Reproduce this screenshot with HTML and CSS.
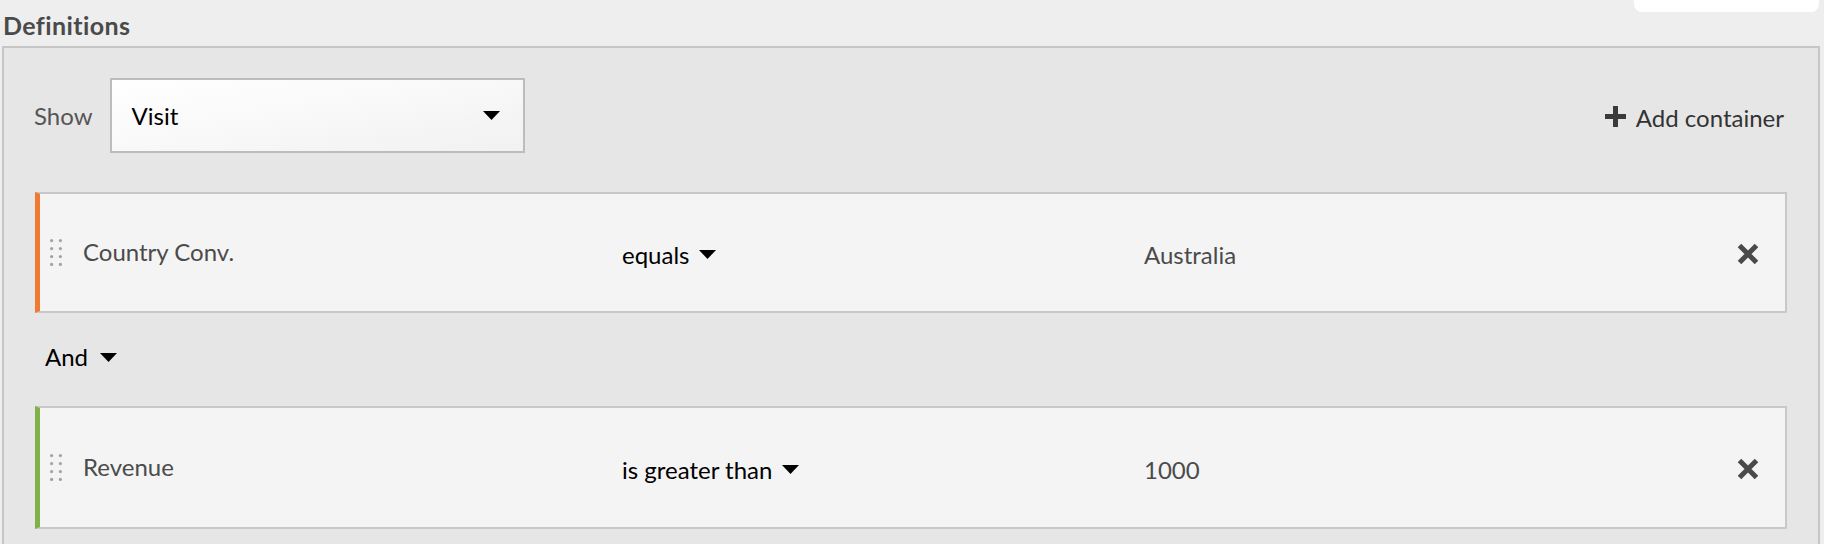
FILE: index.html
```html
<!DOCTYPE html>
<html lang="en">
<head>
<meta charset="utf-8">
<title>Definitions</title>
<link rel="stylesheet" href="styles.css">
</head>
<body>
<div class="redact"></div>
<h2 class="heading">Definitions</h2>
<section class="panel">
  <div class="toolbar">
    <label class="show-label">Show</label>
    <div class="select">
      <span class="select-value">Visit</span>
      <svg class="caret" width="17" height="9" viewBox="0 0 17 9"><polygon points="0,0 17,0 8.5,9" fill="#000"/></svg>
    </div>
    <div class="spacer"></div>
    <button class="add-btn">
      <svg class="plus" width="21" height="21" viewBox="0 0 21 21"><rect x="8" y="0" width="5" height="21" fill="#3a3a3a"/><rect x="0" y="8" width="21" height="5" fill="#3a3a3a"/></svg>
      <span>Add container</span>
    </button>
  </div>

  <div class="rule rule-dimension">
    <svg class="handle" width="12" height="27" viewBox="0 0 12 27">
      <circle cx="1.6" cy="1.6" r="1.6"/><circle cx="10.4" cy="1.6" r="1.6"/>
      <circle cx="1.6" cy="9.6" r="1.6"/><circle cx="10.4" cy="9.6" r="1.6"/>
      <circle cx="1.6" cy="17.6" r="1.6"/><circle cx="10.4" cy="17.6" r="1.6"/>
      <circle cx="1.6" cy="25.4" r="1.6"/><circle cx="10.4" cy="25.4" r="1.6"/>
    </svg>
    <div class="field">Country Conv.</div>
    <div class="op"><span>equals</span><svg class="caret" width="17" height="9" viewBox="0 0 17 9"><polygon points="0,0 17,0 8.5,9" fill="#000"/></svg></div>
    <div class="value">Australia</div>
    <svg class="remove" width="22" height="22" viewBox="0 0 22 22"><path d="M2.5 2.5 L19.5 19.5 M19.5 2.5 L2.5 19.5" stroke="#4a4a4a" stroke-width="5"/></svg>
  </div>

  <div class="connector"><span>And</span><svg class="caret" width="17" height="9" viewBox="0 0 17 9"><polygon points="0,0 17,0 8.5,9" fill="#000"/></svg></div>

  <div class="rule rule-metric">
    <svg class="handle" width="12" height="27" viewBox="0 0 12 27">
      <circle cx="1.6" cy="1.6" r="1.6"/><circle cx="10.4" cy="1.6" r="1.6"/>
      <circle cx="1.6" cy="9.6" r="1.6"/><circle cx="10.4" cy="9.6" r="1.6"/>
      <circle cx="1.6" cy="17.6" r="1.6"/><circle cx="10.4" cy="17.6" r="1.6"/>
      <circle cx="1.6" cy="25.4" r="1.6"/><circle cx="10.4" cy="25.4" r="1.6"/>
    </svg>
    <div class="field">Revenue</div>
    <div class="op"><span>is greater than</span><svg class="caret" width="17" height="9" viewBox="0 0 17 9"><polygon points="0,0 17,0 8.5,9" fill="#000"/></svg></div>
    <div class="value">1000</div>
    <svg class="remove" width="22" height="22" viewBox="0 0 22 22"><path d="M2.5 2.5 L19.5 19.5 M19.5 2.5 L2.5 19.5" stroke="#4a4a4a" stroke-width="5"/></svg>
  </div>
</section>
</body>
</html>
```

FILE: styles.css
```css
* { box-sizing: border-box; }

html, body {
  margin: 0;
  padding: 0;
}

body {
  background: #eeeeee;
  font-family: Lato, "Open Sans", sans-serif;
  color: #4b4b4b;
  height: 544px;
  overflow: hidden;
  position: relative;
}

.redact {
  position: absolute;
  top: -8px;
  left: 1634px;
  width: 185px;
  height: 20px;
  background: #ffffff;
  border-radius: 0 0 8px 8px;
}

.heading {
  margin: 0;
  height: 46px;
  padding: 10px 0 0 3px;
  font-size: 25px;
  line-height: 30px;
  font-weight: 700;
  letter-spacing: 0.4px;
  color: #4a4a4a;
}

.panel {
  margin: 0 4px 0 2px;
  border: 2px solid #c6c6c6;
  border-bottom: none;
  background: #e6e6e6;
  padding: 30px 31px 40px 31px;
}

.toolbar {
  display: flex;
  align-items: center;
  height: 75px;
  margin-left: -1px;
}

.show-label {
  font-size: 24px;
  color: #555555;
  margin-right: 17px;
}

.select {
  width: 415px;
  height: 75px;
  border: 2px solid #bcbcbc;
  background: linear-gradient(170deg, #ffffff 0%, #f7f7f7 60%, #f1f1f1 100%);
  display: flex;
  align-items: center;
  padding: 0 23px 0 20px;
}

.select-value {
  flex: 1;
  font-size: 24px;
  color: #000;
}

.spacer { flex: 1; }

.add-btn {
  display: flex;
  align-items: center;
  gap: 10px;
  background: none;
  border: none;
  padding: 4px 0 0 0;
  margin-right: 3px;
  font-family: Lato, "Open Sans", sans-serif;
  font-size: 24px;
  color: #333333;
  cursor: pointer;
}

.add-btn .plus { margin-top: -2px; }

.rule {
  display: flex;
  align-items: center;
  height: 121px;
  margin-top: 39px;
  background: #f4f4f4;
  border: 2px solid #c8c8c8;
  padding: 0 26px 0 10px;
}

.connector + .rule { margin-top: 0; height: 123px; }

.rule-dimension { border-left: 5px solid #f07a30; }
.rule-metric { border-left: 5px solid #80b24a; }

.handle {
  fill: #a2a2a2;
  margin-right: 21px;
  flex: none;
}

.field {
  width: 539px;
  flex: none;
  font-size: 24px;
  color: #4b4b4b;
  padding-bottom: 3px;
}

.op {
  width: 522px;
  flex: none;
  display: flex;
  align-items: center;
  font-size: 24px;
  color: #000;
  padding-top: 3px;
}

.op .caret { margin-left: 10px; margin-top: 1px; }

.value {
  flex: 1;
  font-size: 24px;
  color: #4b4b4b;
  padding-top: 3px;
}

.remove {
  flex: none;
  margin-top: 2px;
}

.connector {
  display: flex;
  align-items: center;
  height: 93px;
  padding: 0 0 7px 10px;
  font-size: 24px;
  color: #000;
}

.connector .caret { margin-left: 12px; margin-top: 2px; }
```
